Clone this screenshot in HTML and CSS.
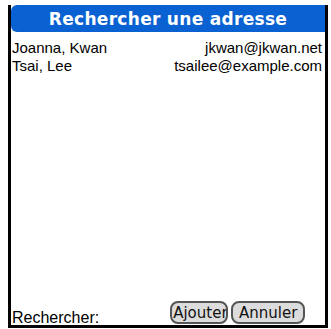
FILE: index.html
```html
<!DOCTYPE html>
<html>
<head>
<meta charset="utf-8">
<link rel="stylesheet" href="styles.css">
</head>
<body>
<div class="screen">
  <div class="title">Rechercher une adresse</div>
  <div class="list">
    <div class="row"><span class="name">Joanna, Kwan</span><span class="mail">jkwan@jkwan.net</span></div>
    <div class="row"><span class="name">Tsai, Lee</span><span class="mail">tsailee@example.com</span></div>
  </div>
  <div class="footer">
    <span class="label">Rechercher:</span>
    <div class="buttons">
      <button class="btn btn-add"><span>Ajouter</span></button>
      <button class="btn btn-cancel">Annuler</button>
    </div>
  </div>
</div>
</body>
</html>
```
FILE: styles.css
```css
html, body {
  margin: 0;
  padding: 0;
  background: #ffffff;
}
.screen {
  margin: 5px 0 0 8px;
  width: 320px;
  height: 323px;
  box-sizing: border-box;
  border-left: 3px solid #000;
  border-right: 3px solid #000;
  border-bottom: 3px solid #000;
  display: flex;
  flex-direction: column;
  font-family: "Liberation Sans", Arial, sans-serif;
  color: #000;
}
.title {
  height: 27px;
  background: #0a62d2;
  border-radius: 6px 0 0 6px;
  color: #fff;
  font-family: "DejaVu Sans", sans-serif;
  font-weight: bold;
  font-size: 17px;
  letter-spacing: 0.3px;
  display: flex;
  align-items: center;
  justify-content: center;
  padding-top: 1px;
  box-sizing: border-box;
}
.list {
  padding: 7px 3px 0 1px;
  flex: 1;
}
.row {
  display: flex;
  justify-content: space-between;
  height: 18px;
  font-size: 15px;
  line-height: 18px;
}
.footer {
  display: flex;
  align-items: flex-end;
  height: 26px;
  padding-left: 1px;
}
.label {
  font-size: 16px;
  line-height: 16px;
  margin-bottom: -1px;
}
.buttons {
  display: flex;
  gap: 3px;
  margin-left: 71px;
  margin-bottom: 1px;
}
.btn {
  height: 23px;
  box-sizing: border-box;
  border: 2px solid #555;
  border-radius: 8px;
  background: #dcdcdc;
  font-family: "DejaVu Sans", sans-serif;
  font-size: 15px;
  color: #111;
  padding: 0;
  line-height: 18px;
  overflow: hidden;
  white-space: nowrap;
}
.btn-add {
  width: 58px;
  text-align: left;
  padding-left: 1px;
}
.btn-cancel {
  width: 74px;
  text-align: center;
}
```
